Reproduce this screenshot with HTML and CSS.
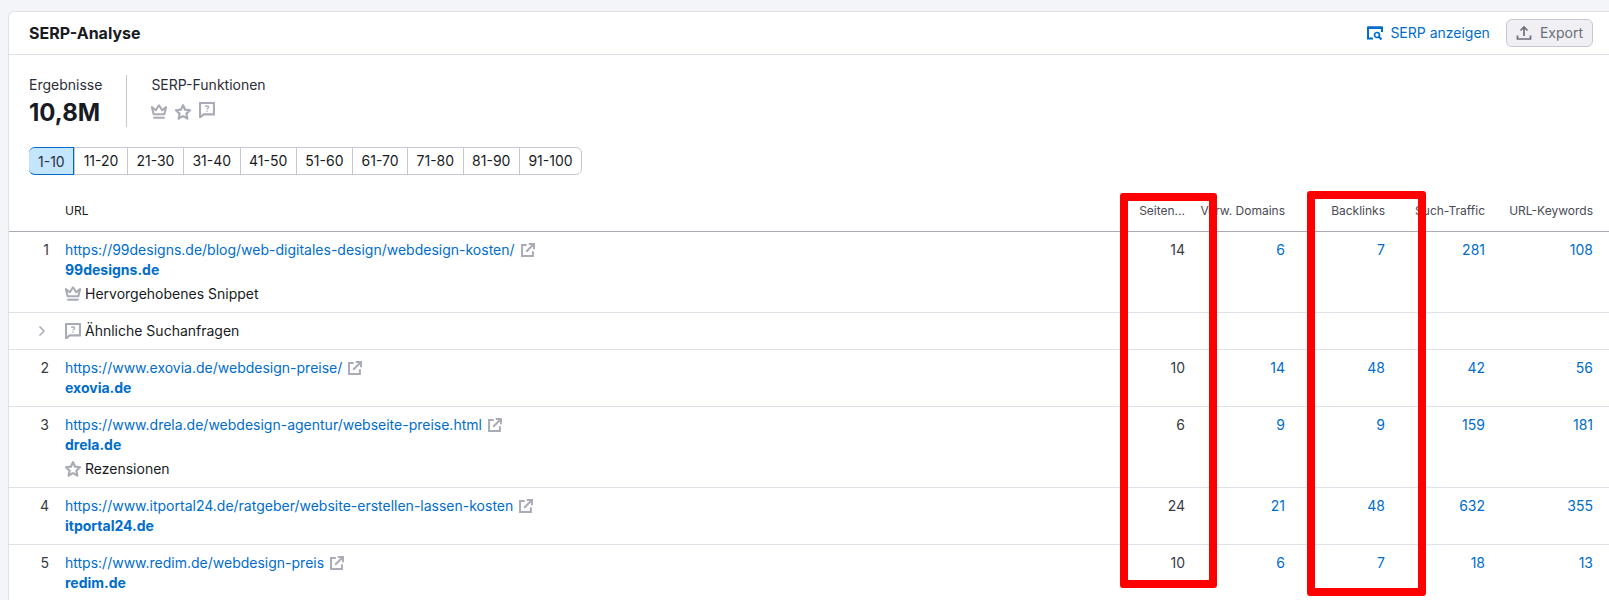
FILE: index.html
```html
<!doctype html>
<html>
	<head>
		<title>SERP-Analyse</title>
		<link rel="stylesheet" href="styles.css">
	</head>
	<body>
		<svg class="sprite" xmlns="http://www.w3.org/2000/svg">
			<symbol id="crown" viewBox="1 1.500 14 14">
				<path d="M1.800 4.200 5.200 7 8 2.600 10.800 7l3.400-2.800-1.500 6.300H3.300z" fill="none" stroke="currentColor" stroke-width="1.800" stroke-linejoin="round"/>
				<rect x="3" y="12.600" width="10" height="1.800" fill="currentColor"/>
			</symbol>
			<symbol id="star" viewBox="1.200 1.200 13.600 13.600">
				<path d="M8 2.200 9.800 6l4.200.5-3.100 2.900.8 4.200L8 11.500l-3.700 2.100.8-4.200L2 6.500 6.200 6z" fill="none" stroke="currentColor" stroke-width="1.900" stroke-linejoin="round"/>
			</symbol>
			<symbol id="question" viewBox="1.700 1.700 12.600 12.600">
				<path d="M2.500 14V2.500h11v9H5.200z" fill="none" stroke="currentColor" stroke-width="1.700" stroke-linejoin="round"/>
				<path d="M6.700 5.400C7 4.700 9.300 4.500 9.300 5.800 9.300 6.700 8 6.700 8 7.700" fill="none" stroke="currentColor" stroke-width="1"/>
				<rect x="7.500" y="8.500" width="1" height="1" fill="currentColor"/>
			</symbol>
			<symbol id="external" viewBox="1.500 1 13.500 13.500">
				<path d="M7 3H2.500v10.500H13V9" fill="none" stroke="currentColor" stroke-width="1.900"/>
				<path d="M6.500 9.500 13.500 2.500M9 2h5v5" fill="none" stroke="currentColor" stroke-width="1.900"/>
			</symbol>
			<symbol id="chevron" viewBox="0 0 16 16">
				<path d="M5.500 3.500 10 8l-4.500 4.500" fill="none" stroke="currentColor" stroke-width="1.500"/>
			</symbol>
			<symbol id="serp" viewBox="0 0 16 16">
				<path d="M6 13.500H1V2.500h14V7" fill="none" stroke="currentColor" stroke-width="2"/>
				<rect x="1" y="1.500" width="14" height="2.500" fill="currentColor"/>
				<circle cx="10" cy="10" r="2.500" fill="none" stroke="currentColor" stroke-width="1.700"/>
				<path d="M12 12l2.500 2.500" stroke="currentColor" stroke-width="2"/>
			</symbol>
			<symbol id="upload" viewBox="0 0 16 16">
				<path d="M8 11V2.500M4.500 5.500 8 2l3.500 3.500" fill="none" stroke="currentColor" stroke-width="1.700"/>
				<path d="M1.500 10.500v3.500h13v-3.500" fill="none" stroke="currentColor" stroke-width="1.700"/>
			</symbol>
		</svg>

		<div class="card">
			<div class="cardHead">
				<h2 class="title">SERP-Analyse</h2>
				<div class="headActions">
					<a class="serpLink"><svg class="icon"><use href="#serp"/></svg>SERP anzeigen</a>
					<button class="exportBtn"><svg class="icon"><use href="#upload"/></svg>Export</button>
				</div>
			</div>

			<div class="stats">
				<div class="stat">
					<div class="statLabel">Ergebnisse</div>
					<div class="statValue">10,8M</div>
				</div>
				<div class="stat statFeatures">
					<div class="statLabel">SERP-Funktionen</div>
					<div class="featureIcons">
						<svg class="icon"><use href="#crown"/></svg>
						<svg class="icon"><use href="#star"/></svg>
						<svg class="icon iconUp"><use href="#question"/></svg>
					</div>
				</div>
			</div>

			<div class="pager">
				<a class="active">1-10</a>
				<a>11-20</a>
				<a>21-30</a>
				<a>31-40</a>
				<a>41-50</a>
				<a>51-60</a>
				<a>61-70</a>
				<a>71-80</a>
				<a>81-90</a>
				<a>91-100</a>
			</div>

			<table class="serpTable">
				<colgroup>
					<col class="colPos">
					<col>
					<col class="colNum">
					<col class="colNum">
					<col class="colNum">
					<col class="colNum">
					<col class="colLast">
				</colgroup>
				<thead>
					<tr>
						<th></th>
						<th class="urlHead">URL</th>
						<th>Seiten...</th>
						<th>Verw. Domains</th>
						<th>Backlinks</th>
						<th>Such-Traffic</th>
						<th>URL-Keywords</th>
					</tr>
				</thead>
				<tbody>
					<tr>
						<td class="pos">1</td>
						<td class="urlCell">
							<a class="url">https://99designs.de/blog/web-digitales-design/webdesign-kosten/</a><svg class="icon extIcon"><use href="#external"/></svg>
							<a class="domain">99designs.de</a>
							<div class="feature"><svg class="icon"><use href="#crown"/></svg>Hervorgehobenes Snippet</div>
						</td>
						<td class="num">14</td>
						<td class="num"><a>6</a></td>
						<td class="num"><a>7</a></td>
						<td class="num"><a>281</a></td>
						<td class="num"><a>108</a></td>
					</tr>
					<tr>
						<td class="pos"><svg class="icon chevron"><use href="#chevron"/></svg></td>
						<td class="urlCell">
							<div class="feature flat"><svg class="icon"><use href="#question"/></svg>Ähnliche Suchanfragen</div>
						</td>
						<td></td>
						<td></td>
						<td></td>
						<td></td>
						<td></td>
					</tr>
					<tr>
						<td class="pos">2</td>
						<td class="urlCell">
							<a class="url">https://www.exovia.de/webdesign-preise/</a><svg class="icon extIcon"><use href="#external"/></svg>
							<a class="domain">exovia.de</a>
						</td>
						<td class="num">10</td>
						<td class="num"><a>14</a></td>
						<td class="num"><a>48</a></td>
						<td class="num"><a>42</a></td>
						<td class="num"><a>56</a></td>
					</tr>
					<tr>
						<td class="pos">3</td>
						<td class="urlCell">
							<a class="url">https://www.drela.de/webdesign-agentur/webseite-preise.html</a><svg class="icon extIcon"><use href="#external"/></svg>
							<a class="domain">drela.de</a>
							<div class="feature"><svg class="icon"><use href="#star"/></svg>Rezensionen</div>
						</td>
						<td class="num">6</td>
						<td class="num"><a>9</a></td>
						<td class="num"><a>9</a></td>
						<td class="num"><a>159</a></td>
						<td class="num"><a>181</a></td>
					</tr>
					<tr>
						<td class="pos">4</td>
						<td class="urlCell">
							<a class="url">https://www.itportal24.de/ratgeber/website-erstellen-lassen-kosten</a><svg class="icon extIcon"><use href="#external"/></svg>
							<a class="domain">itportal24.de</a>
						</td>
						<td class="num">24</td>
						<td class="num"><a>21</a></td>
						<td class="num"><a>48</a></td>
						<td class="num"><a>632</a></td>
						<td class="num"><a>355</a></td>
					</tr>
					<tr>
						<td class="pos">5</td>
						<td class="urlCell">
							<a class="url">https://www.redim.de/webdesign-preis</a><svg class="icon extIcon"><use href="#external"/></svg>
							<a class="domain">redim.de</a>
						</td>
						<td class="num">10</td>
						<td class="num"><a>6</a></td>
						<td class="num"><a>7</a></td>
						<td class="num"><a>18</a></td>
						<td class="num"><a>13</a></td>
					</tr>
				</tbody>
			</table>
		</div>

		<!-- red marks drawn over the table -->
		<div class="mark markPages"></div>
		<div class="mark markBacklinks"></div>
	</body>
</html>
```

FILE: styles.css
```css
* {
	margin: 0px;
	padding: 0px;
	box-sizing: border-box;
}
html, body {
	height: 600px;
	overflow: hidden;
}
body {
	padding: 11px 0 0 8px;
	background: #f4f5f9;
	font-family: "Inter", "Liberation Sans", sans-serif;
	font-size: 14px;
	line-height: 20px;
	color: #191b23;
}
.sprite {
	display: none;
}
.icon {
	width: 16px;
	height: 16px;
	flex: none;
}

.card {
	height: 589px;
	background: #fff;
	border: 1px solid #e0e1e9;
	border-right: 0;
	border-bottom: 0;
	border-radius: 6px 0 0 0;
	overflow: hidden;
}
.cardHead {
	display: flex;
	align-items: center;
	justify-content: space-between;
	height: 43px;
	padding: 0 16px 0 20px;
	border-bottom: 1px solid #e0e1e9;
}
.title {
	font-size: 16px;
	font-weight: 700;
	line-height: 24px;
}
.headActions {
	display: flex;
	align-items: center;
	gap: 16px;
}
.serpLink {
	display: flex;
	align-items: center;
	gap: 7px;
	color: #006dca;
}
.exportBtn {
	display: flex;
	align-items: center;
	gap: 8px;
	height: 28px;
	padding: 0 9px;
	background: #f0f0f4;
	border: 1px solid #c4c7cf;
	border-radius: 6px;
	font: inherit;
	color: #6c6e79;
}

.stats {
	display: flex;
	margin: 20px 0 0 20px;
}
.stat {
	height: 52px;
}
.statFeatures {
	margin-left: 24px;
	padding-left: 24px;
	border-left: 1px solid #c4c7cf;
}
.statLabel {
	color: #2b2e38;
}
.statValue {
	margin-top: 2px;
	font-size: 24px;
	font-weight: 700;
	line-height: 32px;
}
.featureIcons {
	display: flex;
	gap: 8px;
	margin-top: 9px;
	color: #a9abb6;
}
.iconUp {
	margin-top: -2px;
}

.pager {
	display: inline-flex;
	margin: 20px 0 0 20px;
	border: 1px solid #c4c7cf;
	border-radius: 6px;
	height: 28px;
	vertical-align: top;
}
.pager a {
	display: block;
	padding: 0 8.5px;
	line-height: 26px;
	border-left: 1px solid #c4c7cf;
}
.pager a:first-child {
	border-left: 0;
}
.pager .active {
	margin: -1px 0 -1px -1px;
	padding: 1px 8.5px 0 9px;
	background: #c4e5fe;
	border: 1px solid #006dca;
	border-radius: 6px 0 0 6px;
	color: #2b2e38;
}

.serpTable {
	width: 100%;
	margin-top: 15px;
	border-collapse: collapse;
	table-layout: fixed;
}
.colPos {
	width: 56px;
}
.colNum {
	width: 100px;
}
.colLast {
	width: 124px;
}
.serpTable th {
	height: 41px;
	padding-top: 2px;
	font-size: 12px;
	font-weight: 400;
	text-align: right;
	color: #484a54;
	white-space: nowrap;
	border-bottom: 1px solid #a9abb6;
}
.serpTable th.urlHead {
	text-align: left;
	color: #191b23;
}
.serpTable th:last-child,
.serpTable td:last-child {
	padding-right: 16px;
}
.serpTable td {
	padding: 8px 0;
	vertical-align: top;
	border-bottom: 1px solid #e0e1e9;
}
.serpTable td.pos {
	padding-right: 16px;
	text-align: right;
	color: #383a44;
}
.num {
	text-align: right;
	color: #383a44;
}
.num a,
.url {
	color: #006dca;
}
.extIcon {
	width: 14px;
	height: 14px;
	margin-left: 6px;
	vertical-align: -2px;
	color: #a9abb6;
}
.domain {
	display: block;
	font-weight: 700;
	color: #006dca;
}
.feature {
	display: flex;
	align-items: center;
	gap: 4px;
	margin-top: 4px;
}
.feature .icon {
	color: #a9abb6;
}
.flat {
	margin-top: 0;
}
.chevron {
	display: block;
	margin-left: 25px;
	margin-top: 2px;
	color: #a9abb6;
}

.mark {
	position: absolute;
	border: 8px solid #ff0000;
	border-radius: 3px;
}
.markPages {
	left: 1120px;
	top: 193px;
	width: 97px;
	height: 395px;
}
.markBacklinks {
	left: 1307px;
	top: 191px;
	width: 119px;
	height: 405px;
}
```
